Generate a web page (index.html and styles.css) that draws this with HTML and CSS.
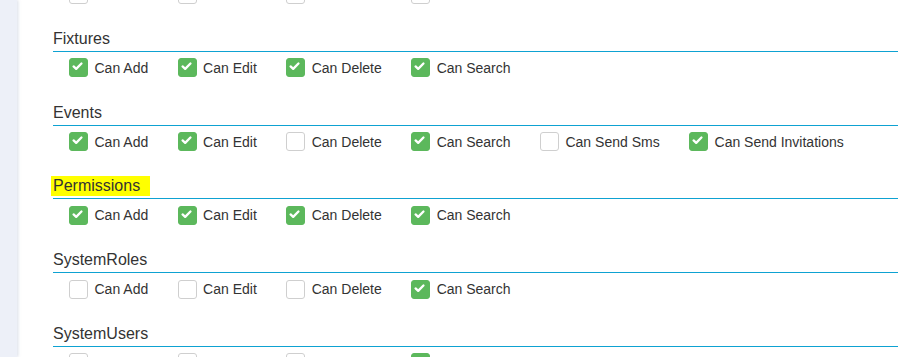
FILE: index.html
```html
<!DOCTYPE html>
<html>
<head>
<meta charset="utf-8">
<link rel="stylesheet" href="styles.css">
</head>
<body>
<div class="page">
  <aside class="sidebar"></aside>
  <main class="content">
    <div class="row row-top">
      <label class="opt"><span class="box"></span><span class="txt">Can Add</span></label>
      <label class="opt"><span class="box"></span><span class="txt">Can Edit</span></label>
      <label class="opt"><span class="box"></span><span class="txt">Can Delete</span></label>
      <label class="opt"><span class="box"></span><span class="txt">Can Search</span></label>
    </div>

    <section class="group">
      <h4 class="title"><span class="name">Fixtures</span></h4>
      <div class="row">
        <label class="opt"><span class="box on"><svg viewBox="0 0 19 19"><polyline points="5,9.3 7.9,12 13.8,6"/></svg></span><span class="txt">Can Add</span></label>
        <label class="opt"><span class="box on"><svg viewBox="0 0 19 19"><polyline points="5,9.3 7.9,12 13.8,6"/></svg></span><span class="txt">Can Edit</span></label>
        <label class="opt"><span class="box on"><svg viewBox="0 0 19 19"><polyline points="5,9.3 7.9,12 13.8,6"/></svg></span><span class="txt">Can Delete</span></label>
        <label class="opt"><span class="box on"><svg viewBox="0 0 19 19"><polyline points="5,9.3 7.9,12 13.8,6"/></svg></span><span class="txt">Can Search</span></label>
      </div>
    </section>

    <section class="group">
      <h4 class="title"><span class="name">Events</span></h4>
      <div class="row">
        <label class="opt"><span class="box on"><svg viewBox="0 0 19 19"><polyline points="5,9.3 7.9,12 13.8,6"/></svg></span><span class="txt">Can Add</span></label>
        <label class="opt"><span class="box on"><svg viewBox="0 0 19 19"><polyline points="5,9.3 7.9,12 13.8,6"/></svg></span><span class="txt">Can Edit</span></label>
        <label class="opt"><span class="box"></span><span class="txt">Can Delete</span></label>
        <label class="opt"><span class="box on"><svg viewBox="0 0 19 19"><polyline points="5,9.3 7.9,12 13.8,6"/></svg></span><span class="txt">Can Search</span></label>
        <label class="opt"><span class="box"></span><span class="txt">Can Send Sms</span></label>
        <label class="opt"><span class="box on"><svg viewBox="0 0 19 19"><polyline points="5,9.3 7.9,12 13.8,6"/></svg></span><span class="txt">Can Send Invitations</span></label>
      </div>
    </section>

    <section class="group">
      <h4 class="title"><span class="name mark">Permissions</span></h4>
      <div class="row">
        <label class="opt"><span class="box on"><svg viewBox="0 0 19 19"><polyline points="5,9.3 7.9,12 13.8,6"/></svg></span><span class="txt">Can Add</span></label>
        <label class="opt"><span class="box on"><svg viewBox="0 0 19 19"><polyline points="5,9.3 7.9,12 13.8,6"/></svg></span><span class="txt">Can Edit</span></label>
        <label class="opt"><span class="box on"><svg viewBox="0 0 19 19"><polyline points="5,9.3 7.9,12 13.8,6"/></svg></span><span class="txt">Can Delete</span></label>
        <label class="opt"><span class="box on"><svg viewBox="0 0 19 19"><polyline points="5,9.3 7.9,12 13.8,6"/></svg></span><span class="txt">Can Search</span></label>
      </div>
    </section>

    <section class="group">
      <h4 class="title"><span class="name">SystemRoles</span></h4>
      <div class="row">
        <label class="opt"><span class="box"></span><span class="txt">Can Add</span></label>
        <label class="opt"><span class="box"></span><span class="txt">Can Edit</span></label>
        <label class="opt"><span class="box"></span><span class="txt">Can Delete</span></label>
        <label class="opt"><span class="box on"><svg viewBox="0 0 19 19"><polyline points="5,9.3 7.9,12 13.8,6"/></svg></span><span class="txt">Can Search</span></label>
      </div>
    </section>

    <section class="group">
      <h4 class="title"><span class="name">SystemUsers</span></h4>
      <div class="row">
        <label class="opt"><span class="box"></span><span class="txt">Can Add</span></label>
        <label class="opt"><span class="box"></span><span class="txt">Can Edit</span></label>
        <label class="opt"><span class="box"></span><span class="txt">Can Delete</span></label>
        <label class="opt"><span class="box on"><svg viewBox="0 0 19 19"><polyline points="5,9.3 7.9,12 13.8,6"/></svg></span><span class="txt">Can Search</span></label>
      </div>
    </section>
  </main>
</div>
</body>
</html>
```
FILE: styles.css
```css
html, body {
  margin: 0;
  padding: 0;
  height: 100%;
  overflow: hidden;
  background: #fff;
}

body {
  font-family: Arial, "Liberation Sans", sans-serif;
  color: #333;
}

.page {
  display: flex;
  height: 100%;
}

.sidebar {
  width: 17px;
  flex: none;
  background: #edf0f8;
  box-shadow: 1px 0 3px rgba(150, 160, 190, 0.35);
  position: relative;
  z-index: 1;
}

.content {
  flex: 1;
  padding: 0 20px 0 36px;
}

.row {
  display: flex;
  align-items: center;
  height: 20px;
  padding-left: 16px;
  margin-top: 6px;
  margin-bottom: 24.75px;
}

.row-top {
  margin-top: -16px;
}

.group {
  margin: 0;
}

.title {
  margin: 0;
  font-size: 16px;
  font-weight: normal;
  line-height: 20px;
  padding-bottom: 2px;
  border-bottom: 1px solid #0ea2d2;
}

.name {
  display: inline-block;
  line-height: 20px;
}

.mark {
  background: #ffff00;
  margin-left: -2px;
  padding: 0 10px 0 2px;
}

.opt {
  display: flex;
  align-items: center;
  margin-right: 29.4px;
  font-size: 14px;
}

.box {
  width: 17px;
  height: 17px;
  border: 1px solid #cfcfcf;
  border-radius: 3px;
  background: #fff;
  margin-right: 6.5px;
  display: flex;
  flex: none;
}

.box.on {
  background: #5cb85c;
  border-color: #5cb85c;
}

.box svg {
  width: 17px;
  height: 17px;
}

.box polyline {
  fill: none;
  stroke: #fff;
  stroke-width: 2.6;
  stroke-linecap: round;
  stroke-linejoin: round;
  transform: translate(-1px, -1px);
}

.txt {
  white-space: nowrap;
}
```
